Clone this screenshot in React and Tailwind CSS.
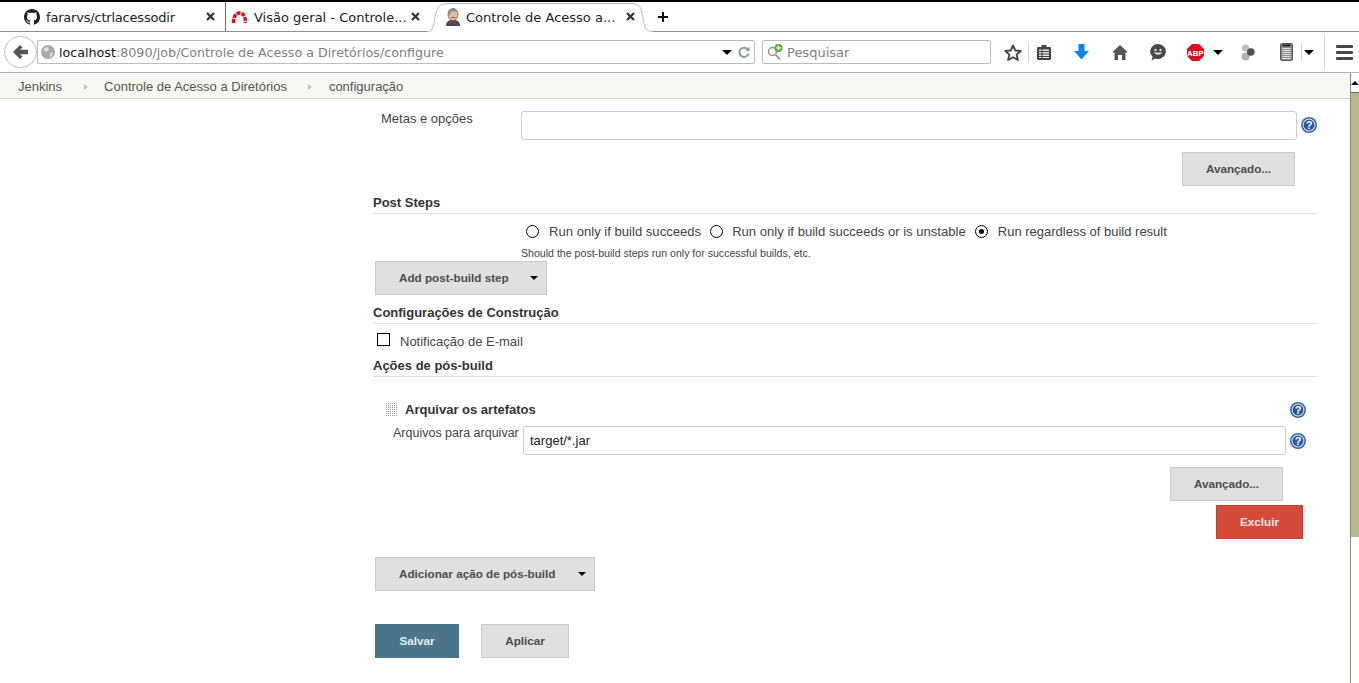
import React from "react";

const Help = ({ className = "" }) => (
  <svg width="16" height="16" viewBox="0 0 16 16" className={"shrink-0 " + className}>
    <circle cx="8" cy="8" r="8" fill="#3b68a8" />
    <circle cx="8" cy="8" r="6.4" fill="#dfe8f4" />
    <circle cx="8" cy="8" r="5.4" fill="#2c5797" />
    <text x="8" y="12" textAnchor="middle" fontSize="11" fontWeight="700" fill="#fff" fontFamily="Liberation Sans, sans-serif">?</text>
  </svg>
);

const Btn = ({ children, className = "", caret }) => (
  <div className={"h-[34px] border border-[#cbcbcb] bg-[#e0e0e0] flex items-center justify-between text-[11.7px] font-bold text-[#4d4d4d] shrink-0 " + className}>
    <span>{children}</span>
    {caret && <span className="w-0 h-0 border-x-[4px] border-x-transparent border-t-[4px] border-t-black mr-[8px]" />}
  </div>
);

const Heading = ({ children, className = "" }) => (
  <div className={"h-[19px] border-b border-[#e2e2e2] font-bold text-[13px] leading-[15px] text-[#333] " + className}>{children}</div>
);

const Radio = ({ on }) => (
  <span className="w-[13px] h-[13px] rounded-full border border-black bg-white flex items-center justify-center shrink-0">
    {on && <span className="w-[5px] h-[5px] rounded-full bg-black" />}
  </span>
);

const Close = ({ className = "" }) => (
  <svg width="9" height="9" viewBox="0 0 9 9" className={"shrink-0 " + className}>
    <path d="M1 1 L8 8 M8 1 L1 8" stroke="#333" strokeWidth="2.2" />
  </svg>
);

const Github = () => (
  <svg width="16" height="16" viewBox="0 0 16 16" className="shrink-0">
    <path fill="#1b1f23" d="M8 0C3.58 0 0 3.58 0 8c0 3.54 2.29 6.53 5.47 7.59.4.07.55-.17.55-.38 0-.19-.01-.82-.01-1.49-2.01.37-2.53-.49-2.69-.94-.09-.23-.48-.94-.82-1.13-.28-.15-.68-.52-.01-.53.63-.01 1.08.58 1.23.82.72 1.21 1.87.87 2.33.66.07-.52.28-.87.51-1.07-1.78-.2-3.64-.89-3.64-3.95 0-.87.31-1.59.82-2.15-.08-.2-.36-1.02.08-2.12 0 0 .67-.21 2.2.82.64-.18 1.32-.27 2-.27s1.36.09 2 .27c1.53-1.04 2.2-.82 2.2-.82.44 1.1.16 1.92.08 2.12.51.56.82 1.27.82 2.15 0 3.07-1.87 3.75-3.65 3.95.29.25.54.73.54 1.48 0 1.07-.01 1.93-.01 2.2 0 .21.15.46.55.38A8.01 8.01 0 0 0 16 8c0-4.42-3.58-8-8-8z" />
  </svg>
);

const Arc = () => (
  <svg width="17" height="14" viewBox="0 0 17 14" className="shrink-0">
    <path d="M2.5 13 C2.5 6 5 3 8.5 3 C12 3 14.5 6 14.5 13" fill="none" stroke="#d8141c" strokeWidth="3.4" strokeDasharray="4 1" />
  </svg>
);

const Butler = () => (
  <svg width="16" height="18" viewBox="0 0 16 18" className="shrink-0">
    <path d="M1 18 C1 13 4 12 8 12 C12 12 15 13 15 18 Z" fill="#3f4b5e" />
    <ellipse cx="8" cy="6.5" rx="5" ry="6" fill="#e6bda0" stroke="#6d5a50" strokeWidth="0.8" />
    <path d="M3 6 C3 1 6 0.5 8.5 0.5 C11.5 0.5 13 3 13 5 L11 3.5 L6 3.5 L5 7 Z" fill="#8f8f8f" />
    <path d="M6 9.5 L10.5 9.5" stroke="#7a5240" strokeWidth="0.9" />
    <path d="M5 13 L8 14.5 L11 13 L11 16 L8 14.8 L5 16 Z" fill="#c3272b" />
  </svg>
);

const Tab1 = () => (
  <div className="w-[226px] h-full flex items-center pl-[24px] border-r border-[#6f6f6f] pb-px">
    <Github />
    <span className="ml-[6px] w-[160px] tracking-[-0.2px] pt-[2px]">fararvs/ctrlacessodir</span>
    <Close />
  </div>
);

const Tab2 = () => (
  <div className="w-[206px] h-full flex items-center pl-[5px] pb-px">
    <Arc />
    <span className="ml-[6px] w-[157px] whitespace-nowrap pt-[2px]">Visão geral - Controle...</span>
    <Close />
  </div>
);

const Tab3 = () => (
  <div className="relative w-[214px] h-full flex items-center pl-[13px] pb-px">
    <svg width="226" height="30" viewBox="0 0 226 30" className="absolute -left-[5px] top-0" fill="none">
      <path d="M0 29.5 C5 29.5 6 27 8 16 C10 5 12 1.5 21 1.5 L204 1.5 C213 1.5 214 5 216 16 C218 27 219 29.5 226 29.5" stroke="#b9b9b9" strokeWidth="1" />
    </svg>
    <Butler />
    <span className="relative ml-[5px] w-[160px] whitespace-nowrap pt-[2px]">Controle de Acesso a...</span>
    <Close className="relative" />
  </div>
);

const Tabs = () => (
  <div className="h-[30px] flex items-center bg-white text-[13px] text-[#222] font-['DejaVu_Sans',sans-serif] relative">
    <div className="absolute left-0 top-[29px] w-[427px] h-px bg-[#8f8f8f]" />
    <div className="absolute left-[653px] right-0 top-[29px] h-px bg-[#8f8f8f]" />
    <Tab1 />
    <Tab2 />
    <Tab3 />
    <svg width="10" height="10" viewBox="0 0 10 10" className="ml-[12px]">
      <path d="M5 0 V10 M0 5 H10" stroke="#111" strokeWidth="2" />
    </svg>
  </div>
);

const Back = () => (
  <div className="absolute left-[4px] top-[4px] w-[33px] h-[32px] rounded-full bg-white border border-[#b8c4d0] flex items-center justify-center">
    <svg width="16" height="14" viewBox="0 0 16 14">
      <path d="M7 0 L0 7 L7 14 L9.5 11.5 L7 9.2 L15 9.2 L15 4.8 L7 4.8 L9.5 2.5 Z" fill="#555" />
    </svg>
  </div>
);

const Globe = () => (
  <svg width="14" height="14" viewBox="0 0 14 14" className="shrink-0">
    <circle cx="7" cy="7" r="7" fill="#a9a9a9" />
    <path d="M3 3 L7 2 L8 5 L5 7 L3 6 Z M9 8 L12 7 L11 11 L9 12 Z" fill="#dcdcdc" />
  </svg>
);

const Reload = () => (
  <svg width="12" height="12" viewBox="0 0 12 12" className="shrink-0 ml-[6px]">
    <path d="M10 4 A4.6 4.6 0 1 0 10.5 7.5" fill="none" stroke="#8a9bab" strokeWidth="2" />
    <path d="M7.5 4.5 L11.5 5.2 L11.5 0.8 Z" fill="#8a9bab" />
  </svg>
);

const Caret = ({ className = "" }) => (
  <span className={"w-0 h-0 border-x-[5px] border-x-transparent border-t-[5px] border-t-black shrink-0 " + className} />
);

const UrlBar = () => (
  <div className="ml-[37px] w-[718px] h-[24px] flex items-center border border-[#bcbcbc] rounded-r-[2px] bg-white pl-[3px]">
    <Globe />
    <span className="ml-[4px] pt-[2px] text-[12.7px] text-[#111] whitespace-nowrap w-[663px]">
      localhost<span className="text-[#808080]">:8090/job/Controle de Acesso a Diretórios/configure</span>
    </span>
    <Caret />
    <Reload />
  </div>
);

const SearchBar = () => (
  <div className="ml-[7px] w-[229px] h-[24px] flex items-center border border-[#bcbcbc] rounded-[2px] bg-white pl-[4px] shrink-0">
    <svg width="16" height="17" viewBox="0 0 16 17" className="shrink-0">
      <circle cx="5.5" cy="7.5" r="4" fill="none" stroke="#8f8f8f" strokeWidth="1.4" />
      <path d="M8.5 10.5 L13 15.5" stroke="#8f8f8f" strokeWidth="1.8" />
      <circle cx="11.5" cy="4" r="4" fill="#5ea82a" />
      <path d="M11.5 1.8 V6.2 M9.3 4 H13.7" stroke="#fff" strokeWidth="1.3" />
    </svg>
    <span className="ml-[4px] pt-[2px] text-[13px] text-[#808080]">Pesquisar</span>
  </div>
);

const Sep = ({ className = "" }) => <span className={"w-px bg-[#d0d4d8] shrink-0 " + className} />;

const Toolbar = () => (
  <div className="flex items-center h-[40px] shrink-0">
    <svg width="18" height="17" viewBox="0 0 18 17" className="ml-[13px] shrink-0">
      <path d="M9 1.5 L11.3 6.5 L16.8 7 L12.6 10.6 L13.9 16 L9 13.2 L4.1 16 L5.4 10.6 L1.2 7 L6.7 6.5 Z" fill="none" stroke="#444" strokeWidth="1.9" strokeLinejoin="round" />
    </svg>
    <Sep className="h-[19px] ml-[6px]" />
    <svg width="14" height="16" viewBox="0 0 14 16" className="ml-[8px] shrink-0">
      <path d="M1 3 H4.5 V1 H9.5 V3 H13 Q14 3 14 4 V15 Q14 16 13 16 H1 Q0 16 0 15 V4 Q0 3 1 3 Z" fill="#444" />
      <rect x="2" y="5.5" width="10" height="8.5" fill="#e8e8e8" />
      <path d="M2 7.5 H12 M2 10 H12 M2 12.5 H12 M5 5.5 V14" stroke="#444" strokeWidth="1.1" />
    </svg>
    <svg width="15" height="16" viewBox="0 0 15 16" className="ml-[23px] shrink-0">
      <path d="M4.5 0 H10.5 V7 H15 L7.5 15.5 L0 7 H4.5 Z" fill="#0a84f0" />
    </svg>
    <svg width="16" height="15" viewBox="0 0 16 15" className="ml-[23px] shrink-0">
      <path d="M8 0 L16 7.5 L13.5 7.5 L13.5 15 L10 15 L10 10 L6 10 L6 15 L2.5 15 L2.5 7.5 L0 7.5 Z" fill="#555" />
    </svg>
    <svg width="16" height="17" viewBox="0 0 16 17" className="ml-[22px] shrink-0">
      <path d="M8 0 A8 7.5 0 1 1 5 14.5 L1.5 16.5 L2.6 12.8 A8 7.5 0 0 1 8 0 Z" fill="#484848" />
      <circle cx="5.5" cy="6" r="1.2" fill="#ddd" />
      <circle cx="10.5" cy="6" r="1.2" fill="#ddd" />
      <path d="M3.5 8.5 Q8 13 12.5 8.5 Z" fill="#ddd" />
    </svg>
    <svg width="17" height="17" viewBox="0 0 17 17" className="ml-[21px] shrink-0">
      <path d="M5 0 H12 L17 5 V12 L12 17 H5 L0 12 V5 Z" fill="#d80f1c" />
      <text x="8.5" y="11.5" textAnchor="middle" fontSize="8" fontWeight="700" fill="#fff" fontFamily="Liberation Sans, sans-serif">ABP</text>
    </svg>
    <Caret className="ml-[9px]" />
    <svg width="14" height="17" viewBox="0 0 14 17" className="ml-[18px] shrink-0">
      <circle cx="4.5" cy="4" r="3.6" fill="#bdbdbd" />
      <circle cx="4.5" cy="12.5" r="4" fill="#b0b0b0" />
      <circle cx="9.8" cy="8" r="3.8" fill="#4f4f4f" />
    </svg>
    <svg width="13" height="18" viewBox="0 0 13 18" className="ml-[25px] shrink-0">
      <rect x="0.5" y="0.5" width="12" height="17" rx="1.5" fill="#8d8d8d" stroke="#555" />
      <rect x="2.5" y="1.5" width="8" height="2" fill="#222" />
      <path d="M2.5 5.5 H10.5 M2.5 7.5 H10.5 M2.5 9.5 H10.5 M2.5 11.5 H10.5 M2.5 13.5 H10.5 M2.5 15.5 H10.5" stroke="#e4e4e4" strokeWidth="1" />
    </svg>
    <Sep className="h-[18px] ml-[8px]" />
    <Caret className="ml-[2px]" />
    <Sep className="h-[34px] ml-[10px]" />
    <div className="ml-[11px] w-[17px] flex flex-col gap-[3px] shrink-0">
      <span className="h-[3px] rounded-[1px] bg-[#484848]" />
      <span className="h-[3px] rounded-[1px] bg-[#484848]" />
      <span className="h-[3px] rounded-[1px] bg-[#484848]" />
    </div>
  </div>
);

const NavBar = () => (
  <div className="relative h-[41px] flex items-center border-b border-[#b5b5ad] bg-white font-['DejaVu_Sans',sans-serif]">
    <Back />
    <UrlBar />
    <SearchBar />
    <Toolbar />
  </div>
);

const Tri = ({ className = "" }) => (
  <span className={"w-0 h-0 border-y-[3px] border-y-transparent border-l-[4px] border-l-[#c4c4c4] " + className} />
);

const Crumbs = () => (
  <div className="h-[26px] bg-[#f6f8f1] border-b border-[#d4d7c9] flex items-center pl-[18px] pt-[2px] text-[13px] text-[#555] shrink-0">
    <span>Jenkins</span>
    <Tri className="ml-[22px]" />
    <span className="ml-[16px]">Controle de Acesso a Diretórios</span>
    <Tri className="ml-[21px]" />
    <span className="ml-[17px]">configuração</span>
  </div>
);

const Grip = () => (
  <svg width="12" height="14" className="shrink-0">
    <defs>
      <pattern id="g" width="2" height="2" patternUnits="userSpaceOnUse">
        <rect width="1" height="1" fill="#9a9a9a" />
      </pattern>
    </defs>
    <rect width="12" height="14" fill="url(#g)" />
  </svg>
);

const Content = () => (
  <div className="flex-1 pl-[373px] pr-[33px] text-[13px] text-[#444]">
    <div className="flex mt-[12px] h-[30px]">
      <span className="w-[148px] pl-[8px] leading-[15px]">Metas e opções</span>
      <div className="w-[776px] h-[29px] border border-[#ccc] rounded-[3px] bg-white" />
      <Help className="ml-[4px] mt-[6px]" />
    </div>
    <div className="flex mt-[11px] pl-[809px]">
      <Btn className="w-[113px] !justify-center">Avançado...</Btn>
    </div>
    <Heading className="mt-[9px]">Post Steps</Heading>
    <div className="flex items-center pl-[153px] mt-[9px] h-[17px] text-[13.1px]">
      <Radio />
      <span className="ml-[10px]">Run only if build succeeds</span>
      <span className="ml-[9px]"><Radio /></span>
      <span className="ml-[9px]">Run only if build succeeds or is unstable</span>
      <span className="ml-[9px]"><Radio on /></span>
      <span className="ml-[10px] text-[13px]">Run regardless of build result</span>
    </div>
    <div className="pl-[148px] mt-[8px] h-[10px] text-[10.6px] leading-[10px]">Should the post-build steps run only for successful builds, etc.</div>
    <Btn caret className="ml-[2px] mt-[3px] w-[172px] pl-[23px]">Add post-build step</Btn>
    <Heading className="mt-[10px]">Configurações de Construção</Heading>
    <div className="flex items-center mt-[10px] h-[14px] pl-[4px]">
      <span className="w-[13px] h-[13px] border border-black bg-white shrink-0 -mt-[3px]" />
      <span className="ml-[10px] pt-[2px]">Notificação de E-mail</span>
    </div>
    <Heading className="mt-[10px]">Ações de pós-build</Heading>
    <div className="flex items-center mt-[25px] h-[16px] pl-[13px]">
      <Grip />
      <span className="ml-[7px] font-bold text-[#333]">Arquivar os artefatos</span>
      <Help className="ml-auto mr-[11px]" />
    </div>
    <div className="flex mt-[8px] h-[29px]">
      <span className="w-[150px] pl-[20px] whitespace-nowrap leading-[15px] text-[12.5px]">Arquivos para arquivar</span>
      <div className="w-[763px] h-[29px] border border-[#ccc] rounded-[3px] bg-white flex items-center pl-[6px] text-[#222]">target/*.jar</div>
      <Help className="ml-[4px] mt-[7px]" />
    </div>
    <div className="flex mt-[12px] pl-[797px]">
      <Btn className="w-[113px] !justify-center">Avançado...</Btn>
    </div>
    <div className="flex mt-[4px] pl-[843px]">
      <Btn className="w-[87px] !justify-center !bg-[#d54b3a] !border-[#c53f2e] !text-[#f7e8e6]">Excluir</Btn>
    </div>
    <Btn caret className="ml-[2px] mt-[18px] w-[220px] pl-[23px]">Adicionar ação de pós-build</Btn>
    <div className="flex mt-[33px] ml-[2px] gap-[22px]">
      <Btn className="w-[84px] !justify-center !bg-[#4b758b] !border-[#4b758b] !text-[#e6edf1]">Salvar</Btn>
      <Btn className="w-[88px] !justify-center">Aplicar</Btn>
    </div>
  </div>
);

const Scrollbar = () => (
  <div className="w-[9px] shrink-0 h-full flex flex-col bg-white border-l border-[#8c8c66]">
    <div className="h-[20px] border-b border-[#666] flex items-center justify-center">
      <span className="w-0 h-0 border-x-[4px] border-x-transparent border-b-[4px] border-b-black" />
    </div>
    <div className="h-[444px] bg-[#b8b88f]" />
  </div>
);

export default function App() {
  return (
    <div className="w-[1359px] h-[683px] overflow-hidden bg-white font-['Liberation_Sans',Arial,sans-serif] flex flex-col">
      <div className="h-[2px] bg-black shrink-0" />
      <Tabs />
      <NavBar />
      <div className="flex-1 flex min-h-0">
        <div className="flex-1 flex flex-col min-w-0">
          <Crumbs />
          <Content />
        </div>
        <Scrollbar />
      </div>
    </div>
  );
}
